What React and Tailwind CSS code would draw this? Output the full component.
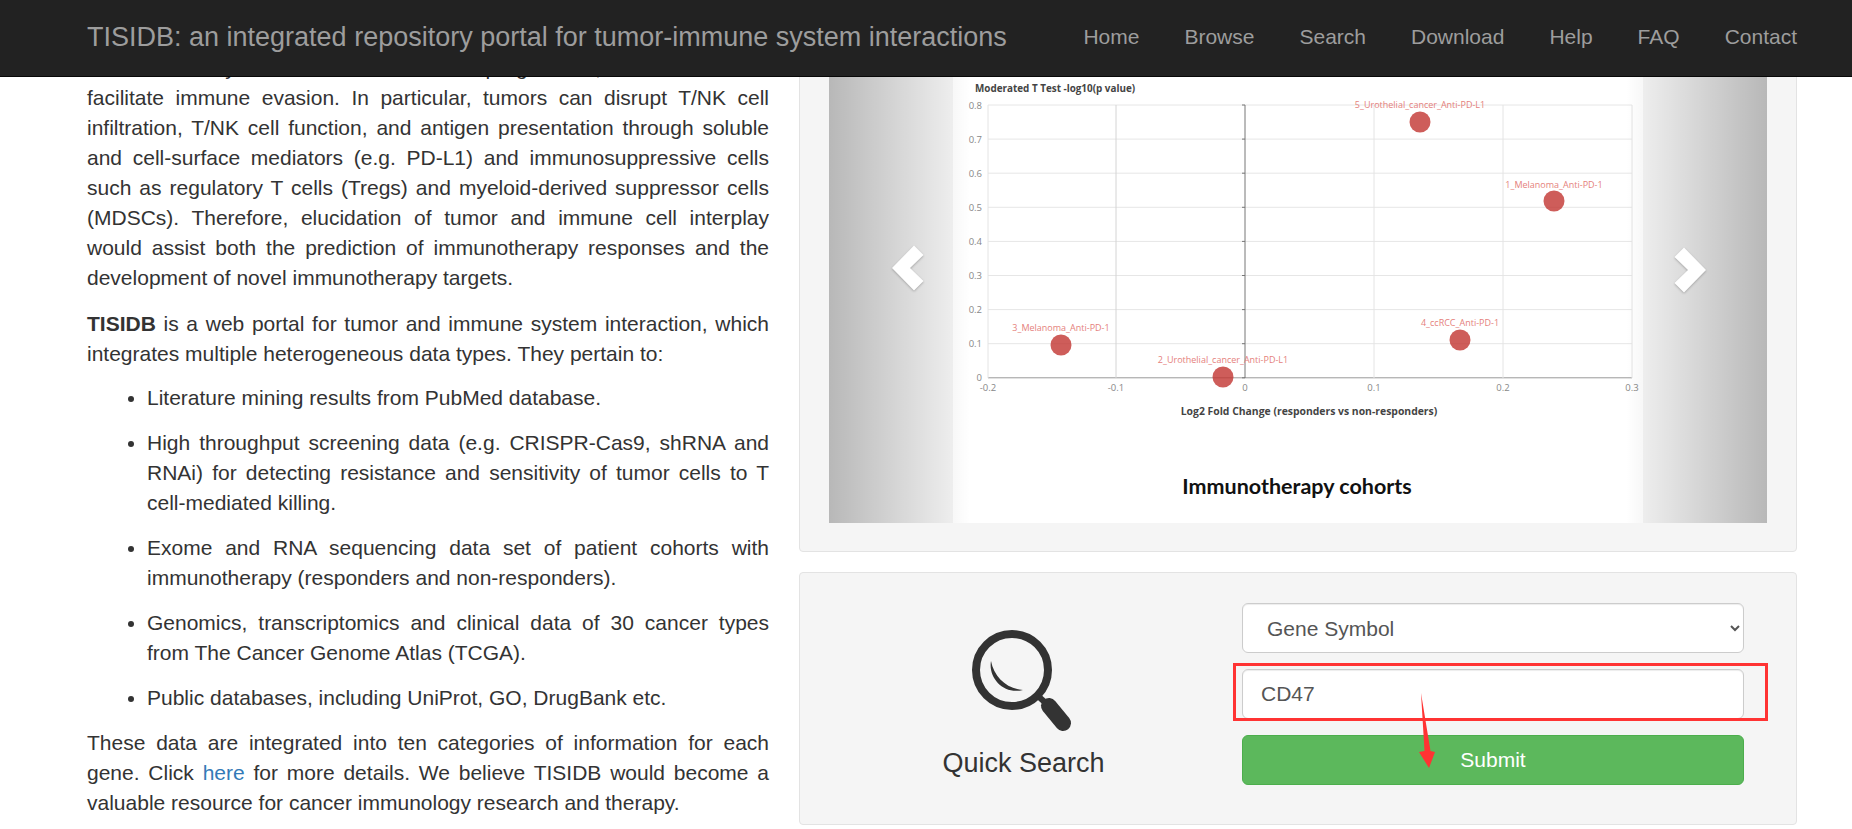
const navLinks = ['Home', 'Browse', 'Search', 'Download', 'Help', 'FAQ', 'Contact']

const yTicks = ['0.8', '0.7', '0.6', '0.5', '0.4', '0.3', '0.2', '0.1', '0']
const xTicks = [
  { x: 35, label: '-0.2' },
  { x: 163, label: '-0.1' },
  { x: 292, label: '0' },
  { x: 421, label: '0.1' },
  { x: 550, label: '0.2' },
  { x: 679, label: '0.3' },
]
const points = [
  { x: 108, y: 275, label: '3_Melanoma_Anti-PD-1', ly: 261 },
  { x: 270, y: 307, label: '2_Urothelial_cancer_Anti-PD-L1', ly: 293 },
  { x: 467, y: 52, label: '5_Urothelial_cancer_Anti-PD-L1', ly: 38 },
  { x: 601, y: 131, label: '1_Melanoma_Anti-PD-1', ly: 118 },
  { x: 507, y: 270, label: '4_ccRCC_Anti-PD-1', ly: 256 },
]

function Chart() {
  return (
    <svg width="690" height="453" viewBox="0 0 690 453" className="block">
      <rect width="690" height="453" fill="#fff" />
      <text x="22" y="22" fontSize="9.9" fontWeight="700" fill="#444" fontFamily="Open Sans, sans-serif">Moderated T Test -log10(p value)</text>
      {yTicks.map((t, i) => {
        const y = 35 + i * 34.1
        return (
          <g key={t}>
            <line x1="35" x2="679" y1={y} y2={y} stroke={i === 8 ? '#999' : '#e6e6e6'} strokeWidth="1" />
            <line x1="289" x2="292" y1={y} y2={y} stroke="#777" />
            <text x="29" y={y + 3.5} fontSize="9.5" fill="#888" textAnchor="end" fontFamily="Open Sans, sans-serif">{t}</text>
          </g>
        )
      })}
      {xTicks.map((t) => (
        <g key={t.label}>
          <line x1={t.x} x2={t.x} y1="35" y2="308" stroke={t.label === '0' ? '#777' : t.label === '-0.1' ? '#d4d4d4' : '#e4e4e4'} />
          <text x={t.x} y="321" fontSize="9.5" fill="#888" textAnchor="middle" fontFamily="Open Sans, sans-serif">{t.label}</text>
        </g>
      ))}
      {points.map((p) => (
        <g key={p.label}>
          <circle cx={p.x} cy={p.y} r="10.5" fill="#c23531" fillOpacity="0.8" />
          <text x={p.x} y={p.ly} fontSize="9" fill="#e57f7c" textAnchor="middle" fontFamily="Open Sans, sans-serif">{p.label}</text>
        </g>
      ))}
      <text x="356" y="345" fontSize="10.4" fontWeight="700" fill="#444" textAnchor="middle" fontFamily="Open Sans, sans-serif">Log2 Fold Change (responders vs non-responders)</text>
      <text x="344" y="424" fontSize="21.5" fontWeight="700" fill="#111" textAnchor="middle" fontFamily="Lato, sans-serif">Immunotherapy cohorts</text>
    </svg>
  )
}

function Chevron({ left }) {
  return (
    <svg width="34" height="46" viewBox="0 0 34 46" className="drop-shadow-[0_1px_1px_rgba(0,0,0,0.25)]">
      <path d={left ? 'M1 23 L23 0.5 L32.5 10 L19 23 L32.5 36 L23 45.5 Z' : 'M33 23 L11 0.5 L1.5 10 L15 23 L1.5 36 L11 45.5 Z'} fill="#fff" />
    </svg>
  )
}

export default function App() {
  return (
    <div className="h-[829px] overflow-hidden bg-white font-['Liberation_Sans',Arial,sans-serif] text-[21px] leading-[30px] text-[#333]">
      {/* Navbar */}
      <nav className="relative z-10 h-[77px] bg-[#222] border-b border-[#080808] flex items-center justify-between pl-[87px] pr-[55px] pb-[2px]">
        <a className="text-[27px] text-[#9d9d9d]">TISIDB: an integrated repository portal for tumor-immune system interactions</a>
        <ul className="flex gap-[45px] text-[21px] text-[#9d9d9d]">
          {navLinks.map((l) => <li key={l}>{l}</li>)}
        </ul>
      </nav>

      <main className="-mt-[37px] flex gap-[30px] pl-[87px] pr-[55px]">
        {/* Intro text */}
        <div className="w-[682px] shrink-0 pt-[13px] text-justify">
          <p className="mb-[16px]">
            The immune system interacts with tumor progression, and cancers can facilitate immune evasion. In particular, tumors can disrupt T/NK cell infiltration, T/NK cell function, and antigen presentation through soluble and cell-surface mediators (e.g. PD-L1) and immunosuppressive cells such as regulatory T cells (Tregs) and myeloid-derived suppressor cells (MDSCs). Therefore, elucidation of tumor and immune cell interplay would assist both the prediction of immunotherapy responses and the development of novel immunotherapy targets.
          </p>
          <p className="mb-[15px]">
            <b>TISIDB</b> is a web portal for tumor and immune system interaction, which integrates multiple heterogeneous data types. They pertain to:
          </p>
          <ul className="list-disc pl-[60px] mb-[15px] space-y-[15px] -mt-[1px]">
            <li>Literature mining results from PubMed database.</li>
            <li>High throughput screening data (e.g. CRISPR-Cas9, shRNA and RNAi) for detecting resistance and sensitivity of tumor cells to T cell-mediated killing.</li>
            <li>Exome and RNA sequencing data set of patient cohorts with immunotherapy (responders and non-responders).</li>
            <li>Genomics, transcriptomics and clinical data of 30 cancer types from The Cancer Genome Atlas (TCGA).</li>
            <li>Public databases, including UniProt, GO, DrugBank etc.</li>
          </ul>
          <p>
            These data are integrated into ten categories of information for each gene. Click <a className="text-[#337ab7]">here</a> for more details. We believe TISIDB would become a valuable resource for cancer immunology research and therapy.
          </p>
        </div>

        {/* Right column */}
        <div className="flex-1 min-w-0">
          <div className="bg-[#f5f5f5] border border-[#e3e3e3] rounded-[4px] px-[29px] pt-[29px] pb-[28px] mb-[20px]">
            <div className="relative flex justify-center">
              <Chart />
              <div className="absolute inset-y-0 left-0 w-[15%] opacity-50 bg-gradient-to-r from-black/50 to-black/0"></div>
              <div className="absolute inset-y-0 right-0 w-[15%] opacity-50 bg-gradient-to-l from-black/50 to-black/0"></div>
              <div className="absolute top-[175px] left-[62px]"><Chevron left /></div>
              <div className="absolute top-[177px] right-[60px]"><Chevron /></div>
            </div>
          </div>

          {/* Quick search */}
          <div className="h-[253px] bg-[#f5f5f5] border border-[#e3e3e3] rounded-[4px] flex pr-[52px] pt-[30px]">
            <div className="w-[442px] shrink-0 pl-[5px] flex flex-col items-center">
              <svg width="114" height="110" viewBox="0 0 114 110" className="mt-[22px]">
                <circle cx="45" cy="45" r="36" fill="none" stroke="#333" strokeWidth="8" />
                <path d="M24 36 C21 52 36 70 56 65 C40 64 27 52 24 36 Z" fill="#333" />
                <line x1="71" y1="71" x2="82" y2="81" stroke="#333" strokeWidth="6" />
                <line x1="82" y1="81" x2="96" y2="98" stroke="#333" strokeWidth="16" strokeLinecap="round" />
              </svg>
              <div className="mt-[8px] text-[27px] leading-[40px]">Quick Search</div>
            </div>
            <div className="flex-1 flex flex-col gap-[16px]">
              <select className="h-[50px] w-full bg-white border border-[#ccc] rounded-[6px] pl-[20px] text-[21px] text-[#555] shadow-[inset_0_1px_1px_rgba(0,0,0,0.075)]">
                <option>Gene Symbol</option>
              </select>
              <div className="relative">
                <input readOnly value="CD47" className="block h-[50px] w-full bg-white border border-[#ccc] rounded-[6px] pl-[18px] text-[21px] text-[#555] shadow-[inset_0_1px_1px_rgba(0,0,0,0.075)]" />
                {/* Red annotation box */}
                <div className="absolute -left-[9px] -top-[6px] -right-[24px] -bottom-[2px] border-[3px] border-[#f33] pointer-events-none"></div>
              </div>
              <button className="h-[50px] w-full bg-[#5cb85c] border border-[#4cae4c] rounded-[6px] text-[21px] text-white">Submit</button>
              <svg width="20" height="80" viewBox="0 0 20 80" className="absolute top-[692px] left-[1416px]">
                <path d="M5 1 L8.5 59 L3 60 L13 76 L19 60 L14.5 59 Z" fill="#f33" />
              </svg>
            </div>
          </div>
        </div>
      </main>
    </div>
  )
}
